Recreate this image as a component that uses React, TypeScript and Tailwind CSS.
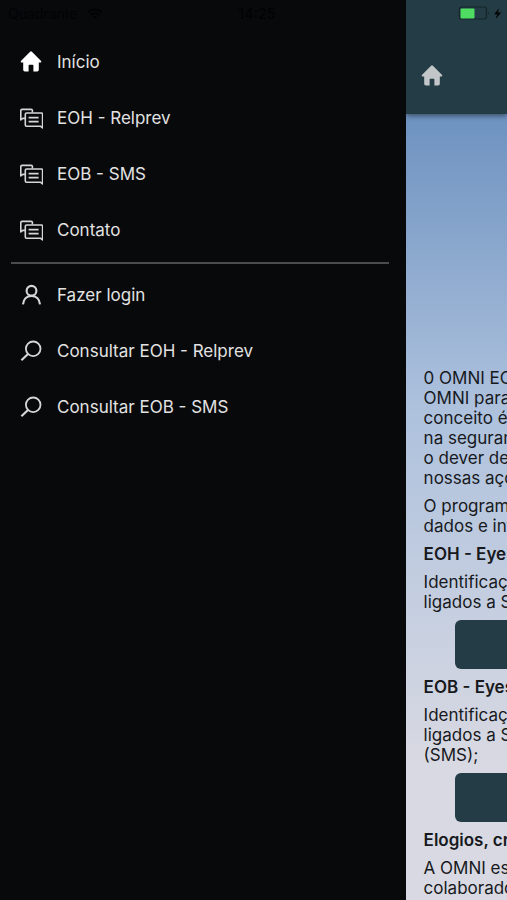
import type { ReactNode } from 'react'

type IconName = 'home' | 'chats' | 'person' | 'search'

interface MenuItem {
  label: string
  icon: IconName
}

const PAGES: MenuItem[] = [
  { label: 'Início', icon: 'home' },
  { label: 'EOH - Relprev', icon: 'chats' },
  { label: 'EOB - SMS', icon: 'chats' },
  { label: 'Contato', icon: 'chats' },
]

const ACTIONS: MenuItem[] = [
  { label: 'Fazer login', icon: 'person' },
  { label: 'Consultar EOH - Relprev', icon: 'search' },
  { label: 'Consultar EOB - SMS', icon: 'search' },
]

function HomeIcon() {
  return (
    <svg viewBox="0 0 24 24" className="size-6" fill="currentColor" aria-hidden="true">
      <path d="M12.9 1.7 22.1 10.9Q22.8 12.4 21.4 12.5H19.8V19.8Q19.8 21.4 18.2 21.4H14.4V15.6Q14.4 14.8 13.6 14.8H10.4Q9.6 14.8 9.6 15.6V21.4H5.8Q4.2 21.4 4.2 19.8V12.5H2.6Q1.2 12.4 1.9 10.9L11.1 1.7Q12 .9 12.9 1.7Z" />
    </svg>
  )
}

const ICONS: Record<IconName, ReactNode> = {
  home: <HomeIcon />,
  chats: (
    <svg viewBox="0 0 24 24" className="size-6" fill="none" stroke="currentColor" strokeWidth="1.6" strokeLinejoin="round" aria-hidden="true">
      <path d="M7.5 7H22.4Q23.6 7 23.6 8.2V22L21.4 20.2H7.5Q6.3 20.2 6.3 19V8.2Q6.3 7 7.5 7Z" />
      <path d="M13.4 6.6V4.6Q13.4 3.4 12.2 3.4H3Q1.8 3.4 1.8 4.6V14L3.8 12.4H6" />
      <path d="M9.6 11.6H19.6M9.6 15.6H19.6" />
    </svg>
  ),
  person: (
    <svg viewBox="0 0 24 24" className="size-6" fill="none" stroke="currentColor" strokeWidth="2.1" aria-hidden="true">
      <circle cx="12.5" cy="7.8" r="4.9" />
      <path d="M4 21.4C4.4 16.2 7.6 12.9 12.5 12.9S20.6 16.2 21 21.4" />
    </svg>
  ),
  search: (
    <svg viewBox="0 0 24 24" className="size-6" fill="none" stroke="currentColor" strokeWidth="1.8" aria-hidden="true">
      <circle cx="14.2" cy="9.8" r="7.3" />
      <path d="M9 15 2.4 21.2" strokeWidth="2.2" />
    </svg>
  ),
}

function MenuList({ items }: { items: MenuItem[] }) {
  return (
    <ul>
      {items.map((item) => (
        <li key={item.label}>
          <a href="#" className="flex h-14 items-center gap-3.5 pl-[19px] text-[#e2e2e2]">
            <span className={item.icon === 'home' ? 'text-white' : 'text-[#d6d6d6]'}>{ICONS[item.icon]}</span>
            <span className="pt-0.5">{item.label}</span>
          </a>
        </li>
      ))}
    </ul>
  )
}

function Lines({ lines }: { lines: string[] }) {
  return (
    <p>
      {lines.map((line) => (
        <span key={line} className="block">
          {line}
        </span>
      ))}
    </p>
  )
}

function Drawer() {
  return (
    <nav className="w-4/5 shrink-0 bg-[#08090b] text-[17px]">
      <div className="flex h-[34px] items-start pt-1.5 pl-2 text-sm leading-4 text-[#020304]">
        <span>Quadrante</span>
        <svg viewBox="0 0 16 12" className="mt-0.5 ml-2.5 h-3 w-4" fill="none" stroke="currentColor" strokeWidth="2" aria-hidden="true">
          <path d="M1 4Q8-1 15 4M3.5 7Q8 3.5 12.5 7M6.5 10Q8 8.5 9.5 10" />
        </svg>
        <span className="ml-auto pr-[130px] font-semibold">14:25</span>
      </div>
      <MenuList items={PAGES} />
      <hr className="mt-1 mr-[17px] mb-[3px] ml-[11px] border-t-2 border-[#4c4c4d]" />
      <MenuList items={ACTIONS} />
    </nav>
  )
}

function Page() {
  return (
    <main className="flex min-w-0 flex-1 flex-col overflow-hidden bg-linear-to-b from-[#6c91bf] from-12% via-[#adc1dd] via-45% to-[#d8d9e2] to-85% text-[17px] leading-5 whitespace-nowrap text-[#17191d]">
      <header className="h-[114px] shrink-0 bg-[#243c45] pt-1.5 shadow-[0_2px_5px_rgba(0,0,0,0.45)]">
        <svg viewBox="0 0 46 14" className="ml-[52px] h-3.5 w-[46px]" aria-hidden="true">
          <rect x="1.5" y="1" width="27" height="12" rx="2.5" fill="none" stroke="#14242a" strokeWidth="1.2" />
          <rect x="2.5" y="2.5" width="14" height="10" rx="1" fill="#4fdc63" />
          <path d="M30 5.5Q32 7 30 8.5Z" fill="#14242a" />
          <path d="M41.4 2 36 8.2H39.2L37.6 13 43.4 6.4H39.8Z" fill="#030607" />
        </svg>
        <button type="button" aria-label="Início" className="mt-11 ml-3.5 block text-[#c3c6c8]">
          <HomeIcon />
        </button>
      </header>
      <article className="mt-[254px] flex flex-col gap-2 pl-[18px]">
        <Lines lines={['0 OMNI EOH', 'OMNI para o', 'conceito é a', 'na segurança', 'o dever de', 'nossas ações']} />
        <Lines lines={['O programa', 'dados e inf']} />
        <h2 className="font-semibold">EOH - Eyes</h2>
        <Lines lines={['Identificação', 'ligados a SMS']} />
        <button type="button" aria-label="EOH" className="ml-[31px] h-[49px] w-96 rounded-md bg-[#243c45]" />
        <h2 className="font-semibold">EOB - Eyes</h2>
        <Lines lines={['Identificação', 'ligados a SMS', '(SMS);']} />
        <button type="button" aria-label="EOB" className="ml-[31px] h-[49px] w-96 rounded-md bg-[#243c45]" />
        <h2 className="font-semibold">Elogios, críticas</h2>
        <Lines lines={['A OMNI está', 'colaborador']} />
      </article>
    </main>
  )
}

export default function App() {
  return (
    <div className="flex min-h-screen overflow-hidden bg-black font-['Inter','Liberation_Sans',sans-serif]">
      <Drawer />
      <Page />
    </div>
  )
}
